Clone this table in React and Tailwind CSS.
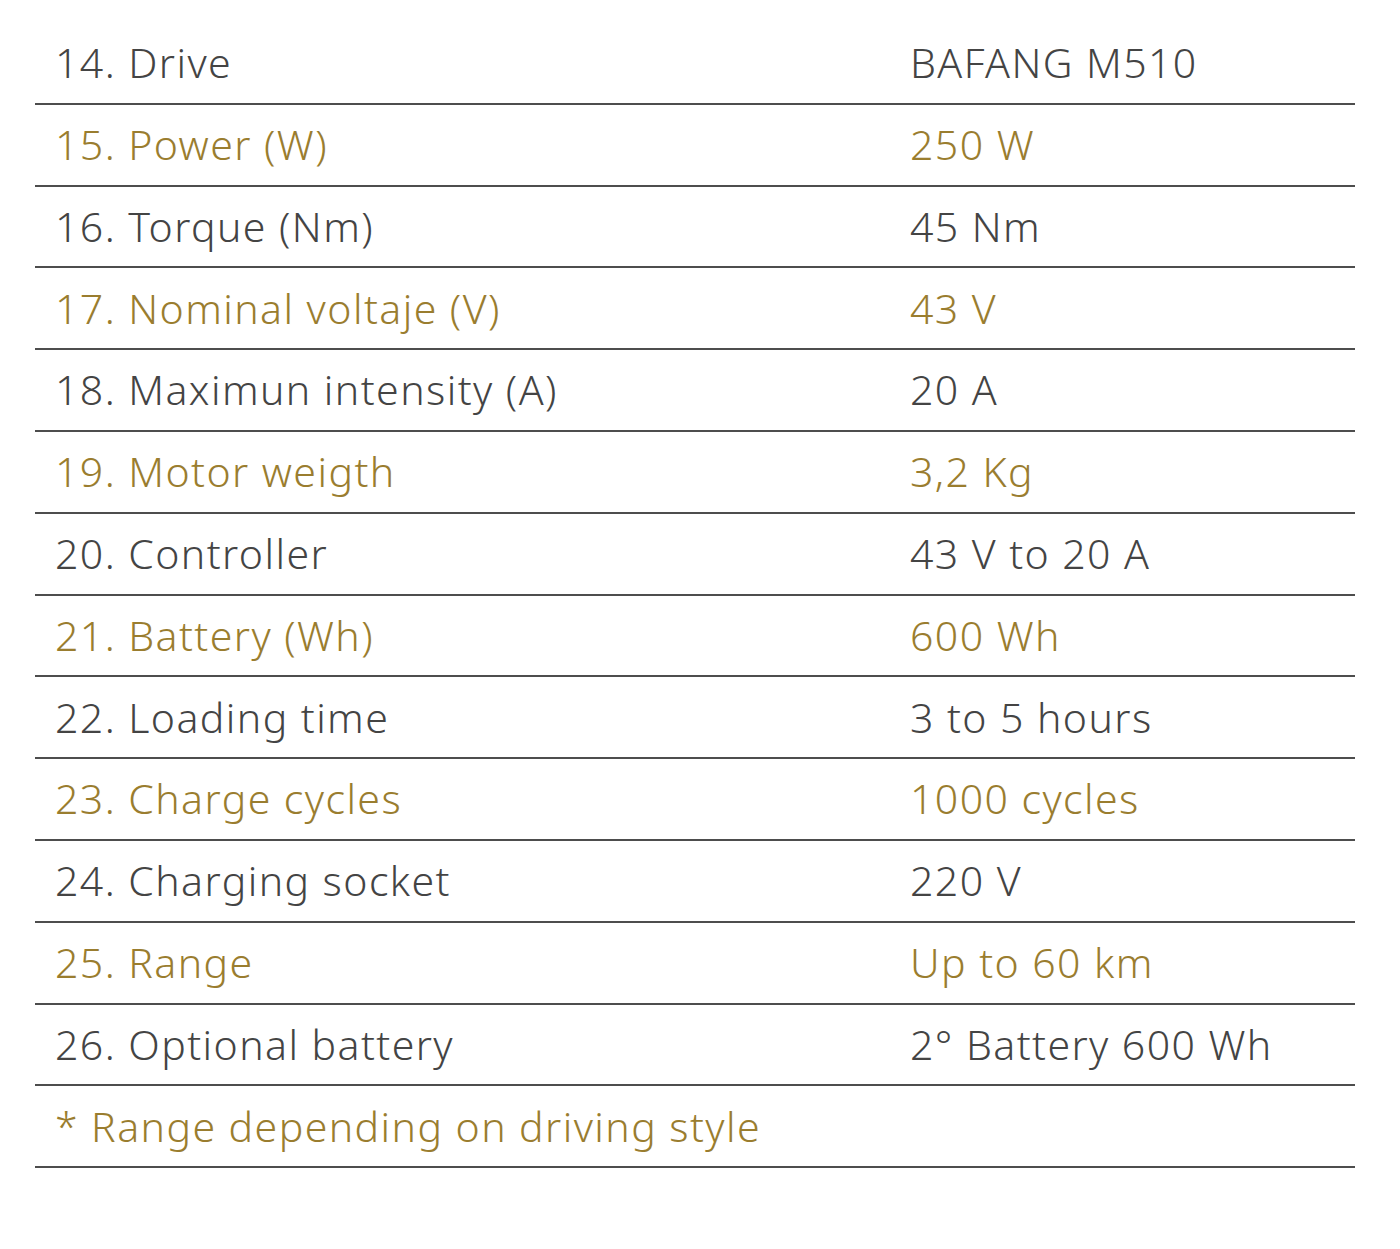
const rows = [
  ["14. Drive", "BAFANG M510"],
  ["15. Power (W)", "250 W"],
  ["16. Torque (Nm)", "45 Nm"],
  ["17. Nominal voltaje (V)", "43 V"],
  ["18. Maximun intensity (A)", "20 A"],
  ["19. Motor weigth", "3,2 Kg"],
  ["20. Controller", "43 V to 20 A"],
  ["21. Battery (Wh)", "600 Wh"],
  ["22. Loading time", "3 to 5 hours"],
  ["23. Charge cycles", "1000 cycles"],
  ["24. Charging socket", "220 V"],
  ["25. Range", "Up to 60 km"],
  ["26. Optional battery", "2° Battery 600 Wh"],
];

export default function App() {
  return (
    <div className="min-h-screen bg-white px-[35px] pt-[23px] font-['Noto_Sans',sans-serif] text-[41px] font-[350] tracking-[0.035em]">
      <div className="w-[1320px]">
        {rows.map(([label, value], i) => (
          <div
            key={label}
            className={`grid h-[81.8px] grid-cols-[855px_1fr] items-center border-b-2 border-[#4d4d4d] ${
              i % 2 === 1 ? "text-[#9a7d2f]" : "text-[#444444]"
            }`}
          >
            <span className="pl-5">{label}</span>
            <span className="pl-5">{value}</span>
          </div>
        ))}
        <div className="flex h-[81.8px] items-center border-b-2 border-[#4d4d4d] text-[#9a7d2f]">
          <span className="pl-5">* Range depending on driving style</span>
        </div>
      </div>
    </div>
  );
}
